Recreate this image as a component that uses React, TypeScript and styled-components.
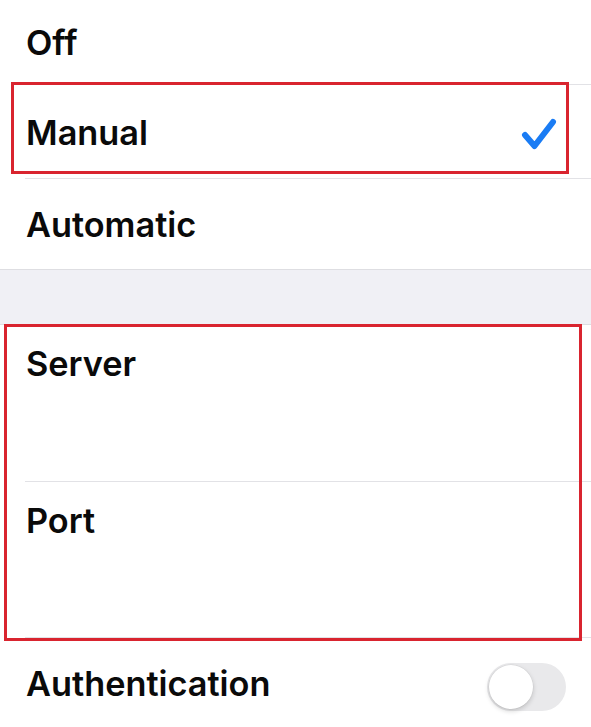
import React from "react";
import styled, { createGlobalStyle } from "styled-components";

const Global = createGlobalStyle`
  html, body { margin: 0; padding: 0; background: #ffffff; }
  body { font-family: Inter, "Noto Sans", "Liberation Sans", sans-serif; -webkit-font-smoothing: antialiased; }
`;

const Page = styled.div`
  width: 591px;
  height: 727px;
  overflow: hidden;
  background: #ffffff;
  display: flex;
  flex-direction: column;
`;

const Group = styled.div<{ $topBorder?: boolean; $bottomBorder?: boolean }>`
  position: relative;
  display: flex;
  flex-direction: column;
  background: #ffffff;
  border-top: ${(p) => (p.$topBorder ? "1px solid #dedee2" : "none")};
  border-bottom: ${(p) => (p.$bottomBorder ? "1px solid #dedee2" : "none")};
`;

const Row = styled.div<{ $height: number; $top?: boolean; $sep?: boolean }>`
  position: relative;
  height: ${(p) => p.$height}px;
  display: flex;
  align-items: ${(p) => (p.$top ? "flex-start" : "center")};
  justify-content: space-between;
  padding: ${(p) => (p.$top ? "18px 26px 0 26px" : "0 26px 0 26px")};
  box-sizing: border-box;
  flex-shrink: 0;
  &::after {
    content: "";
    display: ${(p) => (p.$sep ? "block" : "none")};
    position: absolute;
    left: 25px;
    right: 0;
    bottom: 0;
    height: 1px;
    background: #e2e2e6;
  }
`;

const Label = styled.span`
  font-size: 34.3px;
  line-height: 41px;
  font-weight: 565;
  color: #0a0a0a;
  letter-spacing: 0px;
`;

const Spacer = styled.div`
  height: 54px;
  background: #f0f0f5;
  flex-shrink: 0;
`;

const Highlight = styled.div<{ $t: number; $r: number; $b: number; $l: number }>`
  position: absolute;
  top: ${(p) => p.$t}px;
  right: ${(p) => p.$r}px;
  bottom: ${(p) => p.$b}px;
  left: ${(p) => p.$l}px;
  border: 3px solid #d9242f;
  pointer-events: none;
  z-index: 2;
`;

const Check = styled.svg`
  width: 40px;
  height: 40px;
  margin-right: 6px;
  margin-top: 2px;
`;

const Toggle = styled.div`
  width: 79px;
  height: 48px;
  border-radius: 24px;
  background: #e9e9eb;
  position: relative;
  margin-right: -1px;
  margin-top: 8px;
`;

const Knob = styled.div`
  position: absolute;
  left: 2px;
  top: 2px;
  width: 44px;
  height: 44px;
  border-radius: 50%;
  background: #ffffff;
  box-shadow: 0 2px 5px rgba(0, 0, 0, 0.18), 0 0 0 0.5px rgba(0, 0, 0, 0.06);
`;

export default function App() {
  return (
    <>
      <Global />
      <Page>
        <Group $bottomBorder>
          <Row $height={85} $sep>
            <Label>Off</Label>
          </Row>
          <Row $height={94} $sep>
            <Label>Manual</Label>
            <Check viewBox="0 0 40 40">
              <path
                d="M6 22 L15.5 33 L34 9"
                fill="none"
                stroke="#1a7cf4"
                strokeWidth="6"
                strokeLinecap="round"
                strokeLinejoin="round"
              />
            </Check>
            <Highlight $t={-3} $r={22} $b={5} $l={11} />
          </Row>
          <Row $height={90}>
            <Label>Automatic</Label>
          </Row>
        </Group>
        <Spacer />
        <Group $topBorder>
          <Row $height={157} $top $sep>
            <Label>Server</Label>
          </Row>
          <Row $height={156} $top $sep>
            <Label>Port</Label>
          </Row>
          <Highlight $t={-1} $r={9} $b={-3} $l={4} />
        </Group>
        <Group>
          <Row $height={90}>
            <Label>Authentication</Label>
            <Toggle>
              <Knob />
            </Toggle>
          </Row>
        </Group>
      </Page>
    </>
  );
}
